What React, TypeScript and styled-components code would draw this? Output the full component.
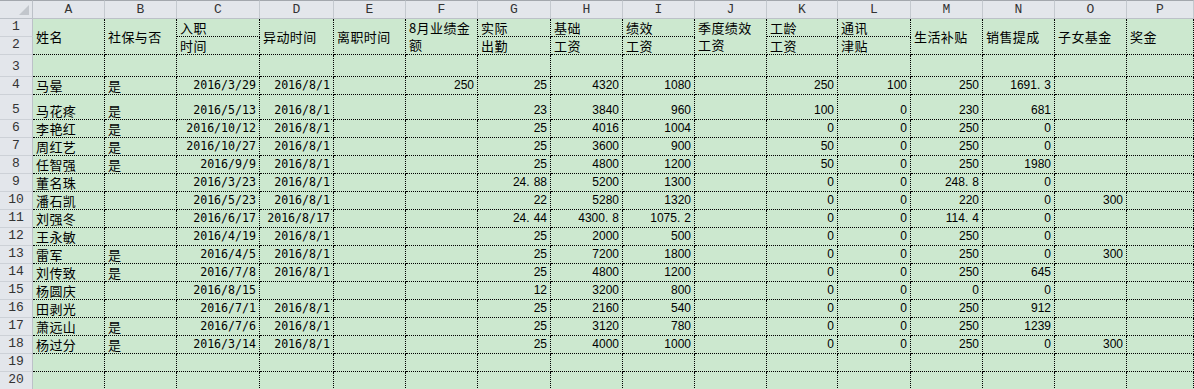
import React from 'react';
import styled, { createGlobalStyle } from 'styled-components';

const GlobalStyle = createGlobalStyle`
    html, body {
        margin: 0;
        padding: 0;
        width: 1194px;
        height: 389px;
        overflow: hidden;
        background: #cce8cf;
    }
`;

const COLS = [33, 72, 72, 83, 74, 72, 72, 73, 72, 72, 72, 71, 73, 72, 72, 72, 67];
const LETTERS = 'ABCDEFGHIJKLMNOP'.split('');

const Sheet = styled.div`
    display: grid;
    grid-template-columns: ${COLS.map((c) => c + 'px').join(' ')};
    grid-template-rows: 19px 18px 18px 22px 18px 25px repeat(15, 18px);
    width: 1194px;
    background: #cce8cf;
    color: #000;
`;

const Corner = styled.div`
    position: relative;
    background: #e3e6eb;
    border-top: 1px solid #a3a7ad;
    border-right: 1px solid #bcc1c8;
    border-bottom: 1px solid #bcc1c8;
    box-sizing: border-box;
    &::after {
        content: '';
        position: absolute;
        right: 3px;
        bottom: 3px;
        border-style: solid;
        border-width: 0 0 10px 10px;
        border-color: transparent transparent #c2c6cc transparent;
    }
`;

const ColHead = styled.div`
    background: #e3e6eb;
    border-top: 1px solid #a3a7ad;
    border-right: 1px solid #c4c9cf;
    border-bottom: 1px solid #bcc1c8;
    box-sizing: border-box;
    display: flex;
    align-items: center;
    justify-content: center;
    font-family: 'Liberation Mono', 'DejaVu Sans Mono', monospace;
    font-size: 13px;
    color: #333;
`;

const RowHead = styled.div`
    background: #e3e6eb;
    border-right: 1px solid #bcc1c8;
    border-bottom: 1px solid #cdd1d7;
    box-sizing: border-box;
    display: flex;
    align-items: flex-end;
    justify-content: center;
    padding-bottom: 1px;
    font-family: 'Liberation Mono', 'DejaVu Sans Mono', monospace;
    font-size: 13px;
    line-height: 16px;
    color: #333;
`;

type Kind = 'cjk' | 'num' | 'date';

const FONTS: Record<Kind, string> = {
    cjk: `font-family: 'Noto Sans CJK SC', 'Noto Sans', sans-serif; font-size: 13px; letter-spacing: 0.4px;`,
    num: `font-family: 'Liberation Sans', Arial, sans-serif; font-size: 12px;`,
    date: `font-family: 'DejaVu Sans Mono', monospace; font-size: 11.6px;`,
};

const Cell = styled.div<{ $span?: number; $right?: boolean; $valign?: string; $kind?: Kind; $wrap?: boolean }>`
    grid-row: span ${(p) => p.$span ?? 1};
    border-right: 1px dotted #000;
    border-bottom: 1px dotted #000;
    box-sizing: border-box;
    display: flex;
    align-items: ${(p) => p.$valign ?? 'flex-end'};
    justify-content: ${(p) => (p.$right ? 'flex-end' : 'flex-start')};
    padding: 0 3px 0 3px;
    overflow: hidden;
    white-space: ${(p) => (p.$wrap ? 'normal' : 'nowrap')};
    line-height: 17px;
    ${(p) => FONTS[p.$kind ?? 'cjk']}
`;

const Dot = styled.span`
    padding-right: 4px;
`;

type Head = { t: React.ReactNode; span?: number; wrap?: boolean };
const ROW1: Head[] = [
    { t: '姓名', span: 2 },
    { t: '社保与否', span: 2 },
    { t: '入职' },
    { t: '异动时间', span: 2 },
    { t: '离职时间', span: 2 },
    { t: <>8月业绩金<br />额</>, span: 2, wrap: true },
    { t: '实际' },
    { t: '基础' },
    { t: '绩效' },
    { t: <>季度绩效<br />工资</>, span: 2, wrap: true },
    { t: '工龄' },
    { t: '通讯' },
    { t: '生活补贴', span: 2 },
    { t: '销售提成', span: 2 },
    { t: '子女基金', span: 2 },
    { t: '奖金', span: 2 },
];
const ROW2 = ['时间', '出勤', '工资', '工资', '工资', '津贴'];

const DATA: string[][] = [
    ['马晕', '是', '2016/3/29', '2016/8/1', '', '250', '25', '4320', '1080', '', '250', '100', '250', '1691.3', '', ''],
    ['马花疼', '是', '2016/5/13', '2016/8/1', '', '', '23', '3840', '960', '', '100', '0', '230', '681', '', ''],
    ['李艳红', '是', '2016/10/12', '2016/8/1', '', '', '25', '4016', '1004', '', '0', '0', '250', '0', '', ''],
    ['周红艺', '是', '2016/10/27', '2016/8/1', '', '', '25', '3600', '900', '', '50', '0', '250', '0', '', ''],
    ['任智强', '是', '2016/9/9', '2016/8/1', '', '', '25', '4800', '1200', '', '50', '0', '250', '1980', '', ''],
    ['董名珠', '', '2016/3/23', '2016/8/1', '', '', '24.88', '5200', '1300', '', '0', '0', '248.8', '0', '', ''],
    ['潘石凯', '', '2016/5/23', '2016/8/1', '', '', '22', '5280', '1320', '', '0', '0', '220', '0', '300', ''],
    ['刘强冬', '', '2016/6/17', '2016/8/17', '', '', '24.44', '4300.8', '1075.2', '', '0', '0', '114.4', '0', '', ''],
    ['王永敏', '', '2016/4/19', '2016/8/1', '', '', '25', '2000', '500', '', '0', '0', '250', '0', '', ''],
    ['雷军', '是', '2016/4/5', '2016/8/1', '', '', '25', '7200', '1800', '', '0', '0', '250', '0', '300', ''],
    ['刘传致', '是', '2016/7/8', '2016/8/1', '', '', '25', '4800', '1200', '', '0', '0', '250', '645', '', ''],
    ['杨圆庆', '', '2016/8/15', '', '', '', '12', '3200', '800', '', '0', '0', '0', '0', '', ''],
    ['田剥光', '', '2016/7/1', '2016/8/1', '', '', '25', '2160', '540', '', '0', '0', '250', '912', '', ''],
    ['萧远山', '是', '2016/7/6', '2016/8/1', '', '', '25', '3120', '780', '', '0', '0', '250', '1239', '', ''],
    ['杨过分', '是', '2016/3/14', '2016/8/1', '', '', '25', '4000', '1000', '', '0', '0', '250', '0', '300', ''],
    Array(16).fill(''),
    Array(16).fill(''),
];

function renderNum(v: string) {
    if (!v.includes('.')) return v;
    const [a, b] = v.split('.');
    return (
        <>
            {a}
            <Dot>.</Dot>
            {b}
        </>
    );
}

export default function App() {
    return (
        <>
            <GlobalStyle />
            <Sheet>
                <Corner />
                {LETTERS.map((l) => (
                    <ColHead key={l}>{l}</ColHead>
                ))}

                <RowHead>1</RowHead>
                {ROW1.map((h, i) => (
                    <Cell
                        key={'h1' + i}
                        $span={h.span}
                        $wrap={h.wrap}
                        $valign={h.wrap ? 'flex-start' : h.span ? 'center' : 'flex-end'}
                    >
                        <div>{h.t}</div>
                    </Cell>
                ))}

                <RowHead>2</RowHead>
                {ROW2.map((t, i) => (
                    <Cell key={'h2' + i}>{t}</Cell>
                ))}

                <RowHead>3</RowHead>
                {LETTERS.map((l) => (
                    <Cell key={'r3' + l} />
                ))}

                {DATA.map((row, r) => (
                    <React.Fragment key={'r' + r}>
                        <RowHead>{r + 4}</RowHead>
                        {row.map((v, c) => {
                            if (c < 2) return <Cell key={c}>{v}</Cell>;
                            if (c < 4)
                                return (
                                    <Cell key={c} $right $kind="date">
                                        {v}
                                    </Cell>
                                );
                            return (
                                <Cell key={c} $right $kind="num">
                                    {renderNum(v)}
                                </Cell>
                            );
                        })}
                    </React.Fragment>
                ))}
            </Sheet>
        </>
    );
}
